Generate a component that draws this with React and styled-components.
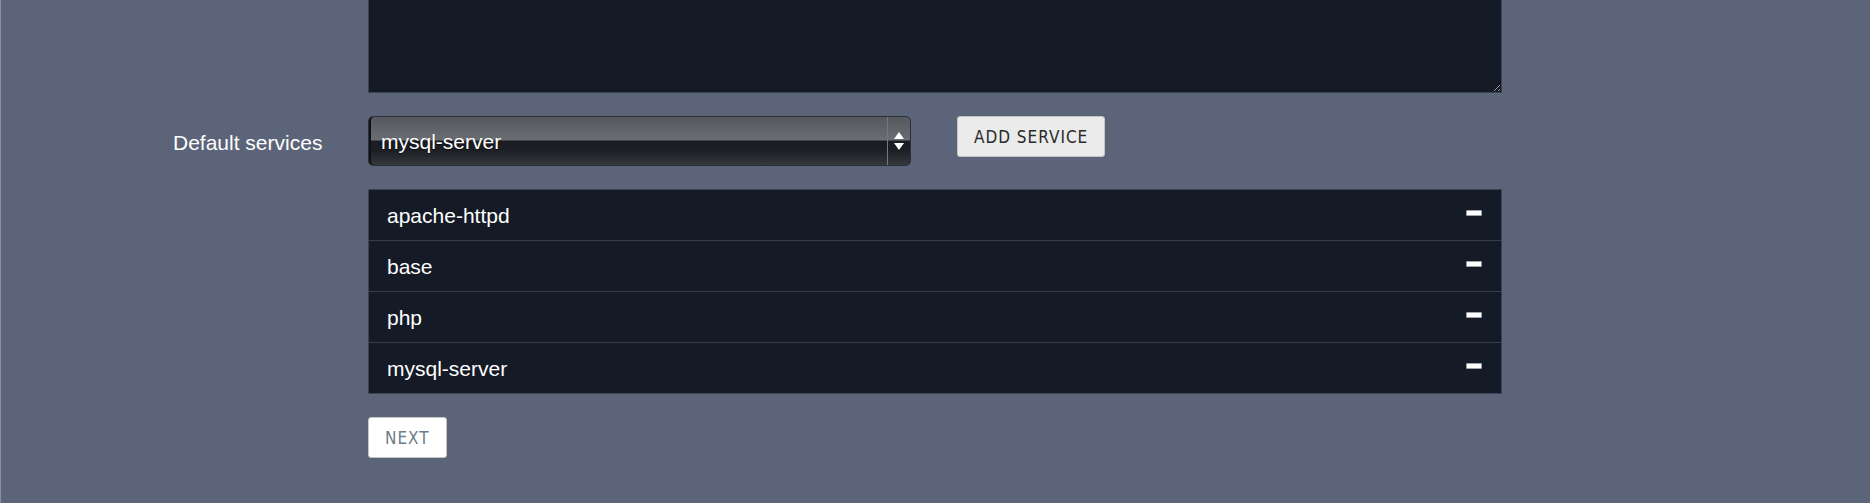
import React, { useState } from "react";
import styled, { createGlobalStyle } from "styled-components";

const GlobalStyle = createGlobalStyle`
  html, body {
    margin: 0;
    padding: 0;
    background: #5c6479;
  }
  body {
    font-family: "Liberation Sans", Arial, sans-serif;
    color: #fff;
  }
`;

const Page = styled.div`
  min-height: 503px;
  border-left: 1px solid #8b8f97;
  box-sizing: border-box;
`;

const Form = styled.div`
  display: grid;
  grid-template-columns: 367px 1134px;
`;

const Label = styled.div`
  padding-left: 172px;
  padding-top: 2px;
  font-size: 21px;
  line-height: 50px;
  margin-top: ${(p) => p.$top || 0}px;
`;

const Field = styled.div`
  margin-top: ${(p) => p.$top || 0}px;
  display: flex;
  align-items: flex-start;
  gap: ${(p) => p.$gap || 0}px;
`;

const TextArea = styled.textarea`
  display: block;
  width: 100%;
  height: 93px;
  box-sizing: border-box;
  margin: 0;
  background: #151b26;
  border: 1px solid #3b4456;
  border-top: none;
  color: #fff;
  resize: both;
  outline: none;
`;

const Select = styled.div`
  width: 543px;
  height: 50px;
  box-sizing: border-box;
  border: 1px solid #2b2f38;
  border-radius: 5px;
  overflow: hidden;
  background: linear-gradient(
    to bottom,
    #55585d 0%,
    #626569 30%,
    #6a6d71 48%,
    #1a1c21 50%,
    #1d1f24 70%,
    #34373c 100%
  );
  box-shadow: inset 3px 0 0 -1px #101114;
  display: flex;
  align-items: center;
`;

const SelectValue = styled.span`
  flex: 1;
  padding-left: 12px;
  padding-top: 2px;
  font-size: 21px;
  color: #fff;
  text-shadow: 0 1px 1px rgba(0, 0, 0, 0.5);
`;

const SelectArrows = styled.div`
  width: 22px;
  align-self: stretch;
  border-left: 1px solid #75787d;
  display: flex;
  align-items: center;
  justify-content: center;
`;

const Button = styled.button`
  height: 41px;
  padding: 0 ${(p) => p.$pad}px;
  box-sizing: border-box;
  background: ${(p) => (p.$light ? "#ffffff" : "#ebebeb")};
  color: ${(p) => (p.$light ? "#6d7c8a" : "#2a2a2a")};
  border: 1px solid #c4c4c4;
  border-radius: 3px;
  font-family: "DejaVu Sans Condensed", "DejaVu Sans", sans-serif;
  font-stretch: condensed;
  font-size: 17px;
  letter-spacing: 1px;
  text-transform: uppercase;
  cursor: pointer;
`;

const List = styled.div`
  flex: 1;
  border: 1px solid #3b4456;
  background: #151b26;
`;

const Row = styled.div`
  display: flex;
  align-items: center;
  height: 49px;
  padding: 1px 19px 0 18px;
  border-top: ${(p) => (p.$first ? "none" : "1px solid #343d4c")};
  font-size: 21px;
`;

const RowName = styled.span`
  flex: 1;
`;

const Remove = styled.button`
  width: 16px;
  height: 6px;
  padding: 0;
  margin-bottom: 6px;
  background: #fff;
  border: 1px solid #9ea3aa;
  border-radius: 1px;
  cursor: pointer;
`;

const Arrows = () => (
  <svg width="12" height="20" viewBox="0 0 12 20">
    <path d="M6 1 L11 8 H1 Z" fill="#fff" />
    <path d="M6 19 L11 12 H1 Z" fill="#fff" />
  </svg>
);

export default function App() {
  const [services, setServices] = useState([
    "apache-httpd",
    "base",
    "php",
    "mysql-server",
  ]);

  return (
    <Page>
      <GlobalStyle />
      <Form>
        <div />
        <Field>
          <TextArea />
        </Field>

        <Label $top={23}>Default services</Label>
        <Field $top={23} $gap={46}>
          <Select>
            <SelectValue>mysql-server</SelectValue>
            <SelectArrows>
              <Arrows />
            </SelectArrows>
          </Select>
          <Button $pad={16}>Add service</Button>
        </Field>

        <div />
        <Field $top={21}>
          <List>
            {services.map((s, i) => (
              <Row key={s} $first={i === 0}>
                <RowName>{s}</RowName>
                <Remove
                  aria-label="remove"
                  onClick={() => setServices(services.filter((x) => x !== s))}
                />
              </Row>
            ))}
          </List>
        </Field>

        <div />
        <Field $top={23}>
          <Button $light $pad={16}>Next</Button>
        </Field>
      </Form>
    </Page>
  );
}
